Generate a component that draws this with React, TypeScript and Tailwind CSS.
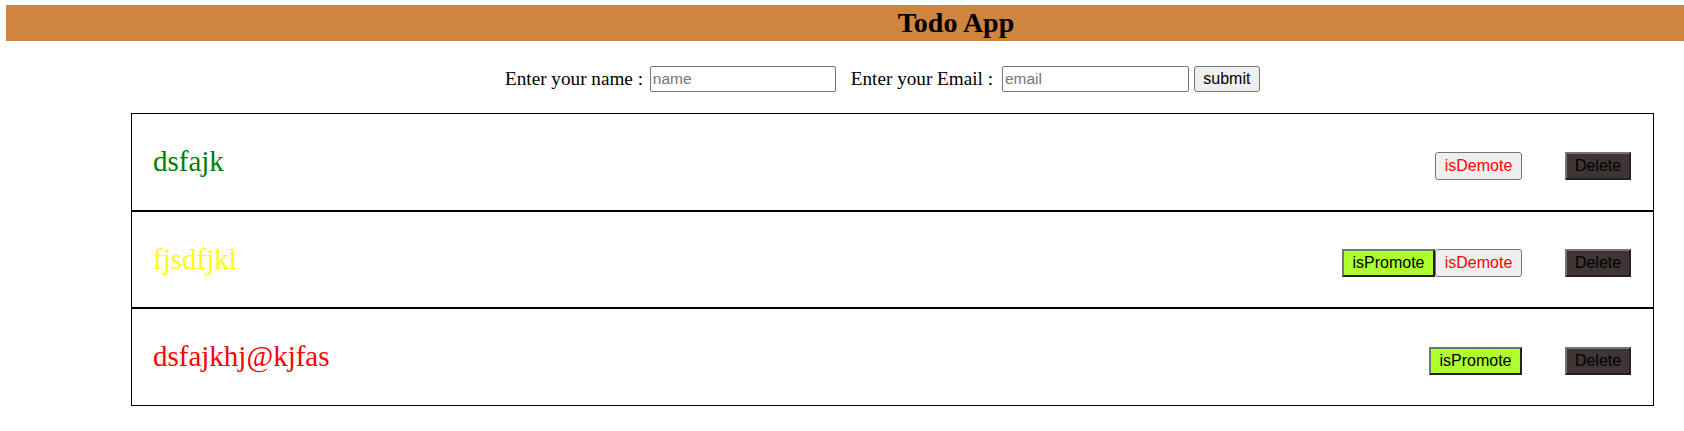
import React from "react";

type Todo = { name: string; color: string; promote: boolean; demote: boolean };

const todos: Todo[] = [
  { name: "dsfajk", color: "text-[#008000]", promote: false, demote: true },
  { name: "fjsdfjkl", color: "text-[#ffff00]", promote: true, demote: true },
  { name: "dsfajkhj@kjfas", color: "text-[#ff0000]", promote: true, demote: false },
];

export default function App() {
  return (
    <div className="w-[1684px] min-h-[431px] bg-white font-['Liberation_Serif',serif] text-black">
      <div className="ml-[6px] mt-[5px] h-[36px] bg-[#cd853f] flex items-center justify-center pl-[222px]">
        <h1 className="text-[28px] font-bold leading-none font-['Liberation_Serif',serif]">Todo App</h1>
      </div>

      <div className="mt-[25px] h-[26px] flex items-center pl-[505px]">
        <label className="text-[19.2px] leading-none whitespace-pre">Enter your name : </label>
        <input
          placeholder="name"
          className="ml-[2px] w-[186px] h-[26px] border border-[#767676] rounded-[2px] px-[2px] text-[15.5px] font-['Liberation_Sans',sans-serif] placeholder:text-[#757575] outline-none"
        />
        <label className="ml-[15px] text-[19.2px] leading-none whitespace-pre">Enter your Email : </label>
        <input
          placeholder="email"
          className="ml-[4px] w-[187px] h-[26px] border border-[#767676] rounded-[2px] px-[2px] text-[15.5px] font-['Liberation_Sans',sans-serif] placeholder:text-[#757575] outline-none"
        />
        <button className="ml-[5px] w-[66px] h-[26px] bg-[#efefef] border border-[#767676] rounded-[3px] text-[16px] font-['Liberation_Sans',sans-serif] text-black flex items-center justify-center">
          submit
        </button>
      </div>

      <div className="mt-[21px] ml-[131px] w-[1523px] flex flex-col">
        {todos.map((t) => (
          <div
            key={t.name}
            className="h-[97.5px] border border-black flex items-center justify-between pl-[21px] pr-[22px]"
          >
            <span className={`text-[29px] leading-normal ${t.color}`}>{t.name}</span>
            <div className="mt-2 flex items-center font-['Liberation_Sans',sans-serif] text-[16px]">
              {t.promote && (
                <button className="h-[28px] w-[93px] bg-[#adff2f] border-2 [border-style:outset] border-[#767676] text-black flex items-center justify-center">
                  isPromote
                </button>
              )}
              {t.demote && (
                <button className="h-[28px] w-[87px] bg-[#efefef] border border-[#767676] rounded-[3px] text-[#ff0000] flex items-center justify-center">
                  isDemote
                </button>
              )}
              <button className="ml-[43px] h-[28px] w-[66px] bg-[#3f3535] border-2 [border-style:outset] border-[#767676] text-black flex items-center justify-center">
                Delete
              </button>
            </div>
          </div>
        ))}
      </div>
    </div>
  );
}
